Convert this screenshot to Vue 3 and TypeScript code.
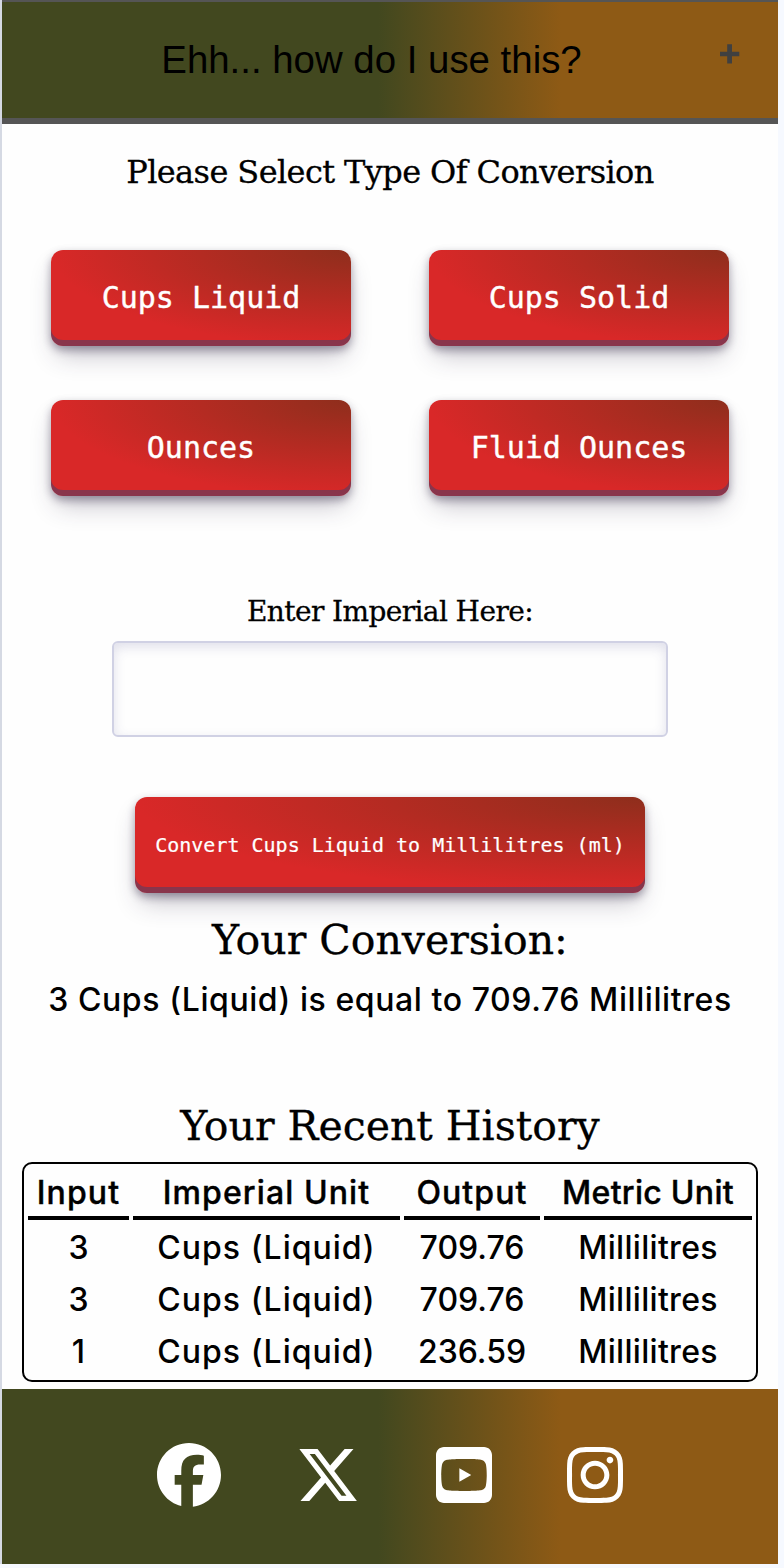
<script setup lang="ts">
interface HistoryEntry {
  input: number
  imperial: string
  output: string
  metric: string
}

interface SocialLink {
  name: string
  width: number
  path: string
}

const conversions: string[] = ['Cups Liquid', 'Cups Solid', 'Ounces', 'Fluid Ounces']

const history: HistoryEntry[] = [
  { input: 3, imperial: 'Cups (Liquid)', output: '709.76', metric: 'Millilitres' },
  { input: 3, imperial: 'Cups (Liquid)', output: '709.76', metric: 'Millilitres' },
  { input: 1, imperial: 'Cups (Liquid)', output: '236.59', metric: 'Millilitres' },
]

const socials: SocialLink[] = [
  {
    name: 'facebook',
    width: 512,
    path: 'M512 256C512 114.6 397.4 0 256 0S0 114.6 0 256C0 376 82.7 476.8 194.2 504.5V334.2H141.4V256h52.8V222.3c0-87.1 39.4-127.5 125-127.5c16.2 0 44.2 3.2 55.7 6.4V172c-6-.6-16.5-1-29.6-1c-42 0-58.2 15.9-58.2 57.2V256h83.6l-14.4 78.2H287V510.1C413.8 494.8 512 386.9 512 256z',
  },
  {
    name: 'x',
    width: 512,
    path: 'M389.2 48h70.6L305.6 224.2 487 464H345L233.7 318.6 106.5 464H35.8L200.7 275.5 26.8 48H172.4L272.9 180.9 389.2 48zM364.4 421.8h39.1L151.1 88h-42L364.4 421.8z',
  },
  {
    name: 'youtube',
    width: 448,
    path: 'M282 256.2l-95.2-54.1V310.3L282 256.2zM384 32H64C28.7 32 0 60.7 0 96V416c0 35.3 28.7 64 64 64H384c35.3 0 64-28.7 64-64V96c0-35.3-28.7-64-64-64zm14.4 136.1c7.6 28.6 7.6 88.2 7.6 88.2s0 59.6-7.6 88.1c-4.2 15.8-16.5 27.7-32.2 31.9C337.9 384 224 384 224 384s-113.9 0-142.2-7.6c-15.7-4.2-28-16.1-32.2-31.9C42 315.9 42 256.3 42 256.3s0-59.7 7.6-88.2c4.2-15.8 16.5-28.2 32.2-32.4C110.1 128 224 128 224 128s113.9 0 142.2 7.7c15.7 4.2 28 16.6 32.2 32.4z',
  },
  {
    name: 'instagram',
    width: 448,
    path: 'M224.1 141c-63.6 0-114.9 51.3-114.9 114.9s51.3 114.9 114.9 114.9S339 319.5 339 255.9 287.7 141 224.1 141zm0 189.6c-41.1 0-74.7-33.5-74.7-74.7s33.5-74.7 74.7-74.7 74.7 33.5 74.7 74.7-33.6 74.7-74.7 74.7zm146.4-194.3c0 14.9-12 26.8-26.8 26.8-14.9 0-26.8-12-26.8-26.8s12-26.8 26.8-26.8 26.8 12 26.8 26.8zm76.1 27.2c-1.7-35.9-9.9-67.7-36.2-93.9-26.2-26.2-58-34.4-93.9-36.2-37-2.1-147.9-2.1-184.9 0-35.8 1.7-67.6 9.9-93.9 36.1s-34.4 58-36.2 93.9c-2.1 37-2.1 147.9 0 184.9 1.7 35.9 9.9 67.7 36.2 93.9s58 34.4 93.9 36.2c37 2.1 147.9 2.1 184.9 0 35.9-1.7 67.7-9.9 93.9-36.2 26.2-26.2 34.4-58 36.2-93.9 2.1-37 2.1-147.8 0-184.8zM398.8 388c-7.8 19.6-22.9 34.7-42.6 42.6-29.5 11.7-99.5 9-132.1 9s-102.7 2.6-132.1-9c-19.6-7.8-34.7-22.9-42.6-42.6-11.7-29.5-9-99.5-9-132.1s-2.6-102.7 9-132.1c7.8-19.6 22.9-34.7 42.6-42.6 29.5-11.7 99.5-9 132.1-9s102.7-2.6 132.1 9c19.6 7.8 34.7 22.9 42.6 42.6 11.7 29.5 9 99.5 9 132.1s2.7 102.7-9 132.1z',
  },
]
</script>

<template>
  <div class="page">
    <button class="accordion" type="button">
      <span class="accordion-title">Ehh... how do I use this?</span>
      <svg class="plus" viewBox="0 0 20 20"><path d="M7.2 0.3h4.8v7.4h7.3v4.6h-7.3v7.2H7.2v-7.2H0V7.7h7.2z" /></svg>
    </button>

    <main>
      <h2 class="serif select-title">Please Select Type Of Conversion</h2>
      <div class="choices">
        <button v-for="c in conversions" :key="c" class="btn" type="button">{{ c }}</button>
      </div>

      <label class="serif field-label" for="amount">Enter Imperial Here:</label>
      <input id="amount" class="field" type="text" />

      <button class="btn convert" type="button">Convert Cups Liquid to Millilitres (ml)</button>

      <h1 class="serif result-title">Your Conversion:</h1>
      <p class="result">3 Cups (Liquid) is equal to 709.76 Millilitres</p>

      <h1 class="serif history-title">Your Recent History</h1>
      <table class="history">
        <colgroup>
          <col class="col-input" />
          <col class="col-imperial" />
          <col class="col-output" />
          <col class="col-metric" />
        </colgroup>
        <thead>
          <tr>
            <th>Input</th>
            <th>Imperial Unit</th>
            <th>Output</th>
            <th class="metric">Metric Unit</th>
          </tr>
        </thead>
        <tbody>
          <tr v-for="(row, i) in history" :key="i">
            <td>{{ row.input }}</td>
            <td class="imperial">{{ row.imperial }}</td>
            <td>{{ row.output }}</td>
            <td class="metric">{{ row.metric }}</td>
          </tr>
        </tbody>
      </table>
    </main>

    <footer>
      <svg
        v-for="s in socials"
        :key="s.name"
        :class="['social', { narrow: s.width === 448 }]"
        :viewBox="`0 0 ${s.width} 512`"
      >
        <path :d="s.path" />
      </svg>
    </footer>
  </div>
</template>

<style>
html,
body {
  margin: 0;
  background: #f6f9ff;
}
</style>

<style scoped>
* {
  box-sizing: border-box;
}

.page {
  width: 778px;
  height: 1564px;
  border-left: 2px solid #d5d9e3;
  background: #fefefe;
  color: #000;
  display: flex;
  flex-direction: column;
}

.accordion,
footer {
  background: linear-gradient(90deg, #42481f 48.5%, #8e5a15 72%);
}

.accordion {
  height: 124px;
  width: 100%;
  flex: none;
  border: 0;
  border-top: 2px solid #555;
  border-bottom: 6px solid #555;
  padding: 0 38px 0 21px;
  display: flex;
  align-items: center;
  color: #000;
}

.accordion-title {
  flex: 1;
  text-align: center;
  font: 38.4px/44px 'Liberation Sans', Arial, sans-serif;
}

.plus {
  width: 20px;
  height: 20px;
  margin-bottom: 13px;
  fill: #404040;
}

main {
  flex: 1;
  display: flex;
  flex-direction: column;
  align-items: center;
}

.serif {
  margin: 0;
  font-family: 'DejaVu Serif', serif;
  font-weight: 400;
  white-space: nowrap;
  -webkit-text-stroke: 0.3px #000;
}

.select-title {
  margin-top: 24px;
  height: 48px;
  font-size: 32px;
  line-height: 48px;
  letter-spacing: -0.6px;
}

.choices {
  margin-top: 54px;
  display: grid;
  grid-template-columns: 300px 300px;
  gap: 54px 78px;
}

.btn {
  height: 96px;
  padding: 0;
  border: 0;
  border-radius: 12px;
  background: radial-gradient(100% 100% at 100% 0, #8e2e1c 0, #d92828 100%);
  box-shadow:
    rgba(45, 35, 66, 0.4) 0 4px 8px,
    rgba(45, 35, 66, 0.3) 0 14px 26px -6px,
    rgba(58, 65, 111, 0.5) 0 -6px 0 inset;
  color: #fff;
  font: 30px/36px 'DejaVu Sans Mono', monospace;
  -webkit-text-stroke: 0.4px #fff;
  white-space: nowrap;
}

.field-label {
  margin-top: 96px;
  height: 40px;
  font-size: 28px;
  line-height: 40px;
  letter-spacing: -0.6px;
}

.field {
  margin-top: 9px;
  width: 556px;
  height: 96px;
  flex: none;
  border: 2px solid #d0d1e4;
  border-radius: 6px;
  background: #fefefe;
  box-shadow: inset 0 4px 12px rgba(60, 60, 130, 0.16);
}

.convert {
  flex: none;
  margin-top: 60px;
  width: 510px;
  font-size: 20px;
  -webkit-text-stroke-width: 0.2px;
}

.result-title {
  margin-top: 17px;
  height: 60px;
  font-size: 41px;
  line-height: 60px;
}

.result {
  margin: 6px 0 0;
  height: 48px;
  font: 500 32px/48px Inter, sans-serif;
  letter-spacing: 0.58px;
  white-space: nowrap;
}

.history-title {
  margin-top: 72px;
  height: 60px;
  font-size: 41px;
  line-height: 60px;
}

.history {
  margin-top: 6px;
  width: 736px;
  height: 220px;
  table-layout: fixed;
  border: 2px solid #000;
  border-radius: 10px;
  border-collapse: separate;
  border-spacing: 4px;
  font: 500 32px/48px Inter, sans-serif;
  text-align: center;
}

.col-input {
  width: 101px;
}

.col-imperial {
  width: 267px;
}

.col-output {
  width: 136px;
}

.col-metric {
  width: 208px;
}

.history th,
.history td {
  padding: 0;
  height: 48px;
  line-height: 48px;
  white-space: nowrap;
}

.history th {
  height: 52px;
  padding-top: 1px;
  line-height: 47px;
  border-bottom: 4px solid #000;
  font-weight: 500;
  letter-spacing: 1.1px;
  -webkit-text-stroke: 0.4px #000;
}

.history .imperial {
  letter-spacing: 1px;
}

.history .metric {
  letter-spacing: 0.3px;
}

footer {
  height: 175px;
  flex: none;
  padding: 54px 155px 0;
  display: flex;
  justify-content: space-between;
}

.social {
  width: 64px;
  height: 64px;
  fill: #fff;
}

.narrow {
  width: 56px;
}
</style>
